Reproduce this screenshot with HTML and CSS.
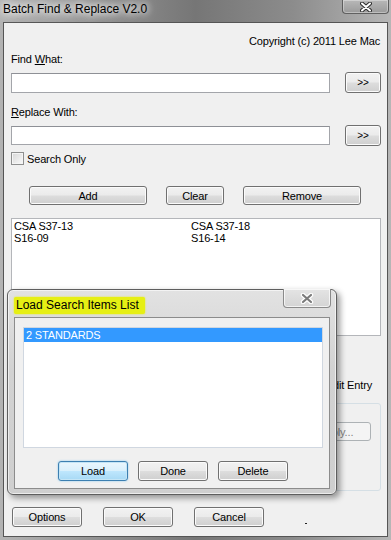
FILE: index.html
```html
<!DOCTYPE html>
<html lang="en">
<head>
    <meta charset="UTF-8">
    <title>Batch Find &amp; Replace V2.0</title>
    <link rel="stylesheet" href="styles.css">
</head>
<body>
<div class="window">
    <div class="titlebar">
        <span class="title">Batch Find &amp; Replace V2.0</span>
        <div class="close-btn">
            <svg width="12" height="10" viewBox="0 0 12 10">
                <path d="M2 1.5 L10 8.5 M10 1.5 L2 8.5" stroke="#2c2c2c" stroke-width="4" stroke-linecap="round"/>
                <path d="M2 1.5 L10 8.5 M10 1.5 L2 8.5" stroke="#ffffff" stroke-width="2" stroke-linecap="round"/>
            </svg>
        </div>
    </div>

    <div class="client">
        <div class="copyright">Copyright (c) 2011 Lee Mac</div>

        <div class="label label-find">Find <u>W</u>hat:</div>
        <div class="field-row row-find">
            <div class="textbox"></div>
            <div class="btn btn-arrow">&gt;&gt;</div>
        </div>

        <div class="label label-replace"><u>R</u>eplace With:</div>
        <div class="field-row row-replace">
            <div class="textbox"></div>
            <div class="btn btn-arrow">&gt;&gt;</div>
        </div>

        <div class="check-row">
            <span class="checkbox"></span>
            <span class="check-label">Search Only</span>
        </div>

        <div class="action-row">
            <div class="btn btn-wide">Add</div>
            <div class="btn btn-clear">Clear</div>
            <div class="btn btn-wide">Remove</div>
        </div>

        <div class="listbox">
            <div class="list-col">
                <div>CSA S37-13</div>
                <div>S16-09</div>
            </div>
            <div class="list-col">
                <div>CSA S37-18</div>
                <div>S16-14</div>
            </div>
        </div>

        <div class="edit-row">Edit Entry</div>

        <div class="groupbox">
            <div class="btn btn-disabled">Apply...</div>
        </div>

        <div class="bottom-row">
            <div class="btn btn-std">Options</div>
            <div class="btn btn-std">OK</div>
            <div class="btn btn-std">Cancel</div>
            <span class="dash"></span>
        </div>
    </div>

    <div class="dialog">
        <div class="dlg-titlebar">
            <span class="dlg-title">Load Search Items List</span>
            <div class="dlg-close">
                <svg width="14" height="11" viewBox="0 0 14 11">
                    <path d="M3 2 L11 9 M11 2 L3 9" stroke="#ffffff" stroke-width="4.5" stroke-linecap="round"/>
                    <path d="M3 2 L11 9 M11 2 L3 9" stroke="#7b7b7b" stroke-width="2.2" stroke-linecap="round"/>
                </svg>
            </div>
        </div>
        <div class="dlg-client">
            <div class="dlg-list">
                <div class="dlg-item selected">2 STANDARDS</div>
            </div>
            <div class="dlg-buttons">
                <div class="btn btn-std btn-default">Load</div>
                <div class="btn btn-std">Done</div>
                <div class="btn btn-std">Delete</div>
            </div>
        </div>
    </div>
</div>
</body>
</html>
```

FILE: styles.css
```css
body {
    margin: 0;
    background: #ffffff;
}

.window {
    position: relative;
    width: 391px;
    height: 540px;
    box-sizing: border-box;
    background: linear-gradient(to right, #b3b3b3 0%, #929292 25%, #767676 50%, #8c8c8c 75%, #b6b6b6 100%);
    font-family: "Liberation Sans", Arial, sans-serif;
    font-size: 11px;
    letter-spacing: -0.15px;
    color: #000;
    overflow: hidden;
}

/* main title bar */
.titlebar {
    height: 22px;
    display: flex;
    align-items: flex-start;
}

.title {
    font-size: 12px;
    letter-spacing: 0;
    line-height: 16px;
    padding-left: 3px;
    margin-top: 1px;
    text-shadow: 0 0 6px #fff, 0 0 10px #fff, 0 0 14px rgba(255, 255, 255, 0.8);
}

.close-btn {
    margin-left: auto;
    margin-right: 2px;
    width: 47px;
    height: 14px;
    box-sizing: border-box;
    border: 1px solid rgba(60, 60, 60, 0.7);
    border-top: none;
    border-radius: 0 0 4px 4px;
    background: linear-gradient(#b8b8b8, #9a9a9a);
    box-shadow: inset 0 0 0 1px rgba(255, 255, 255, 0.35);
    display: flex;
    justify-content: center;
    align-items: center;
}

/* main client area */
.client {
    margin: 0 3px;
    height: 515px;
    box-sizing: border-box;
    border: 1px solid #555;
    background: #f0f0f0;
    padding: 0 6px 0 7px;
}

.copyright {
    margin-top: 11px;
    line-height: 14px;
    text-align: right;
    padding-right: 1px;
}

.label {
    line-height: 14px;
}

.label-find {
    margin-top: 4px;
}

.label-replace {
    margin-top: 12px;
}

.field-row {
    display: flex;
    align-items: flex-start;
    height: 21px;
    margin-top: 6px;
}

.textbox {
    width: 319px;
    height: 20px;
    margin-top: 1px;
    box-sizing: border-box;
    border: 1px solid #a3a5aa;
    border-top-color: #8e9096;
    background: #fff;
}

.row-replace .textbox {
    height: 19px;
}

.btn {
    box-sizing: border-box;
    border: 1px solid #707070;
    border-radius: 3px;
    background: linear-gradient(#f2f2f2 0%, #ebebeb 48%, #dddddd 52%, #cfcfcf 100%);
    box-shadow: inset 0 0 0 1px #fbfbfb;
    display: flex;
    align-items: center;
    justify-content: center;
    line-height: 14px;
}

.btn-arrow {
    width: 36px;
    height: 21px;
    margin-left: 15px;
    font-size: 10px;
}

.check-row {
    display: flex;
    align-items: center;
    height: 13px;
    margin-top: 6px;
}

.checkbox {
    width: 13px;
    height: 13px;
    box-sizing: border-box;
    border: 1px solid #8e8f8f;
    background: linear-gradient(135deg, #d6d6d6, #fafafa);
    box-shadow: inset 0 0 0 1px #f4f4f4;
}

.check-label {
    margin-left: 3px;
    line-height: 14px;
}

.action-row {
    display: flex;
    height: 19px;
    margin-top: 21px;
    padding-left: 18px;
    gap: 19px;
}

.btn-wide {
    width: 118px;
}

.btn-clear {
    width: 58px;
}

.listbox {
    margin-top: 13px;
    width: 370px;
    height: 118px;
    box-sizing: border-box;
    border: 1px solid #b4b6ba;
    background: #fff;
    display: flex;
    padding: 1px 0 0 2px;
    line-height: 12px;
}

.list-col {
    width: 177px;
}

.edit-row {
    margin-top: 42px;
    line-height: 14px;
    text-align: right;
    padding-right: 9px;
}

.groupbox {
    margin-top: 11px;
    width: 370px;
    height: 88px;
    box-sizing: border-box;
    border: 1px solid #d5dfe5;
    border-radius: 3px;
    display: flex;
    justify-content: flex-end;
    align-items: flex-start;
}

.btn-disabled {
    width: 70px;
    height: 19px;
    margin-top: 18px;
    margin-right: 9px;
    border-color: #adb2b5;
    background: #f4f4f4;
    box-shadow: none;
    color: #838383;
}

.bottom-row {
    display: flex;
    height: 20px;
    margin-top: 16px;
    padding-left: 1px;
    gap: 21px;
}

.btn-std {
    width: 70px;
    height: 20px;
}

.dash {
    width: 2px;
    height: 1px;
    background: #222;
    align-self: flex-end;
    margin-left: 20px;
    margin-bottom: 3px;
}

/* load search items dialog */
.dialog {
    position: absolute;
    left: 7px;
    top: 289px;
    width: 330px;
    height: 206px;
    box-sizing: border-box;
    border: 1px solid #5e5e5e;
    border-radius: 6px;
    padding: 0 6px 5px 6px;
    background: linear-gradient(#e2e2e2, #d2d2d2 40%, #cfcfcf);
    box-shadow: inset 0 0 0 1px rgba(255, 255, 255, 0.6), 3px 3px 6px rgba(0, 0, 0, 0.4);
}

.dlg-titlebar {
    height: 27px;
    display: flex;
    align-items: flex-start;
}

.dlg-title {
    margin-top: 7px;
    font-size: 12px;
    letter-spacing: 0;
    line-height: 14px;
    padding: 1px 6px 2px 2px;
    background: #e6ef14;
    border-radius: 2px;
    box-shadow: 0 0 2px #e6ef14;
}

.dlg-close {
    margin-left: auto;
    margin-right: -1px;
    margin-top: -1px;
    width: 48px;
    height: 19px;
    box-sizing: border-box;
    border: 1px solid #8a8a8a;
    border-top: none;
    border-radius: 0 0 4px 4px;
    background: linear-gradient(#e4e4e4, #d4d4d4);
    box-shadow: inset 0 0 0 1px rgba(255, 255, 255, 0.7);
    display: flex;
    justify-content: center;
    align-items: center;
}

.dlg-client {
    height: 172px;
    box-sizing: border-box;
    border: 1px solid #8c8c8c;
    background: #f0f0f0;
    padding-top: 9px;
}

.dlg-list {
    margin-left: 8px;
    width: 300px;
    height: 121px;
    box-sizing: border-box;
    border: 1px solid #d0d7e0;
    background: #fff;
}

.dlg-item {
    height: 14px;
    line-height: 14px;
    padding-left: 2px;
}

.selected {
    background: #3399ff;
    color: #fff;
}

.dlg-buttons {
    display: flex;
    justify-content: center;
    gap: 10px;
    margin-top: 13px;
    padding-left: 2px;
}

.btn-default {
    border-color: #3c7fb1;
    background: linear-gradient(#eaf6fd 0%, #d9f0fc 48%, #bee6fd 52%, #a7d9f5 100%);
    box-shadow: inset 0 0 0 1px #c4e5f6, 0 0 2px #7fc6f0;
}
```
